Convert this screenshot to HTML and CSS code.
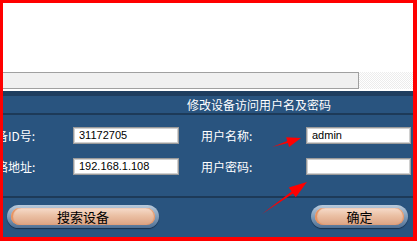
FILE: index.html
```
<!DOCTYPE html>
<html>
<head>
<meta charset="utf-8">
<link rel="stylesheet" href="styles.css">
</head>
<body>
<div class="frame">
  <div class="blank"></div>
  <div class="hscroll"><div class="thumb"></div><div class="track"></div></div>
  <div class="gap"></div>
  <div class="panel">
    <div class="band"></div>
    <div class="title">修改设备访问用户名及密码</div>
    <div class="form">
      <div class="label">设备ID号:</div>
      <div class="field">31172705</div>
      <div class="label right">用户名称:</div>
      <div class="field">admin</div>
      <div class="label">网络地址:</div>
      <div class="field">192.168.1.108</div>
      <div class="label right">用户密码:</div>
      <div class="field"></div>
    </div>
    <div class="sep"></div>
    <div class="buttons">
      <div class="btn wide"><span>搜索设备</span></div>
      <div class="btn narrow"><span>确定</span></div>
    </div>
  </div>
</div>
<svg class="arrows" width="417" height="241" viewBox="0 0 417 241">
  <polygon points="272,147 287.9,143.1 289.1,146.9 301,138 286.1,137.3 287.3,141.1" fill="#f00"/>
  <polygon points="262,214 293,193.4 295.8,197.3 307,182 288.8,187.5 291.6,191.4" fill="#f00"/>
</svg>
</body>
</html>
```
FILE: styles.css
```
html, body { margin: 0; padding: 0; }
body {
  background: #ff0000;
  width: 417px;
  height: 241px;
  overflow: hidden;
  position: relative;
  font-family: "Noto Sans CJK SC", "Liberation Sans", sans-serif;
}
.frame {
  margin: 3px 4px 4px 3px;
  height: 234px;
  background: #fff;
  overflow: hidden;
  display: flex;
  flex-direction: column;
}
.blank { height: 69px; flex: none; }
.hscroll { height: 17px; display: flex; flex: none; }
.thumb {
  width: 356px;
  box-sizing: border-box;
  border: 1px solid #a0a0a0;
  border-left: none;
  background: #f0f0f0;
}
.track {
  flex: 1;
  background-color: #fff;
  background-image: conic-gradient(#ececec 25%, #fff 0 50%, #ececec 0 75%, #fff 0);
  background-size: 2px 2px;
}
.gap { height: 2px; flex: none; }
.panel {
  flex: 1;
  background: #29547f;
  display: flex;
  flex-direction: column;
}
.band { height: 5px; background: #1f3e5f; }
.title {
  height: 17px;
  line-height: 17px;
  padding-left: 184px;
  color: #fff;
  font-size: 12px;
  border-bottom: 2px solid #1d3a58;
}
.form {
  margin-left: -19px;
  padding-top: 12px;
  padding-bottom: 21px;
  display: grid;
  grid-template-columns: 89px 106px 127px 105px;
  row-gap: 14px;
}
.label {
  color: #fff;
  font-size: 12px;
  height: 17px;
  line-height: 17px;
  white-space: nowrap;
}
.label.right { padding-left: 22px; }
.field {
  height: 17px;
  box-sizing: border-box;
  background: #fff;
  border: 1px solid #9a9a9a;
  box-shadow: inset 0 0 0 1px #d0d0d0;
  font-family: "Liberation Sans", Arial, sans-serif;
  font-size: 11px;
  line-height: 15px;
  padding-left: 5px;
  color: #000;
}
.sep { height: 2px; background: #1d3a58; }
.buttons {
  display: flex;
  justify-content: space-between;
  padding: 7px 5px 0 4px;
}
.btn {
  height: 23px;
  box-sizing: border-box;
  border-radius: 12px;
  padding: 3px 4px 3px 4px;
  background: linear-gradient(#b9cadb, #7f9ab6 55%, #4f6f93);
  box-shadow: 0 1px 1px #17304d;
  display: flex;
}
.btn span {
  flex: 1;
  border-radius: 9px;
  background: linear-gradient(#f6dccb, #ebc0a4 45%, #dca383);
  box-shadow: inset 2px 0 1px #e8915e, inset -1px 0 1px #e8915e;
  color: #000;
  font-size: 13px;
  line-height: 17px;
  text-align: center;
}
.wide { width: 152px; }
.narrow { width: 97px; }
.arrows { position: absolute; left: 0; top: 0; pointer-events: none; }
```
